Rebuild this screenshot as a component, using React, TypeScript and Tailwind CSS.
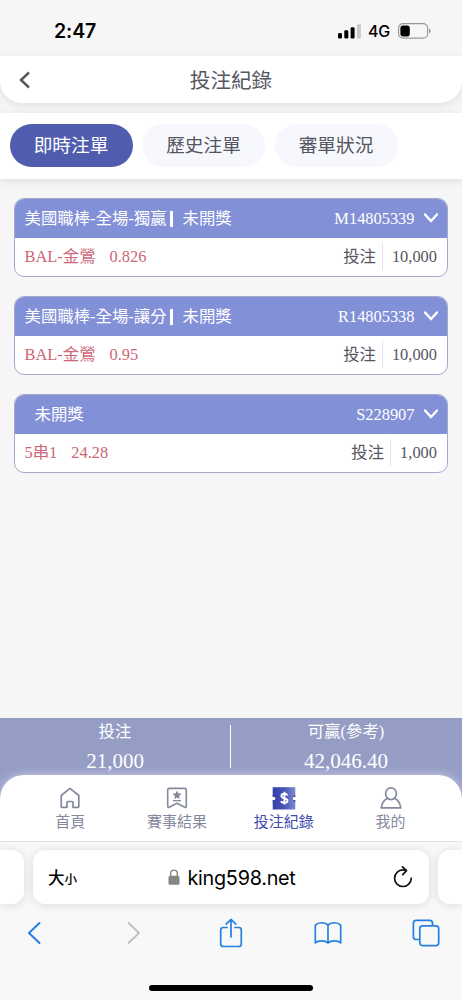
import React from 'react';

// 注單資料
const bets = [
  { title: '美國職棒-全場-獨贏', status: '未開獎', id: 'M14805339', pick: 'BAL-金鶯', odds: '0.826', amount: '10,000' },
  { title: '美國職棒-全場-讓分', status: '未開獎', id: 'R14805338', pick: 'BAL-金鶯', odds: '0.95', amount: '10,000' },
  { title: '', status: '未開獎', id: 'S228907', pick: '5串1', odds: '24.28', amount: '1,000' }
];

const tabs = ['即時注單', '歷史注單', '審單狀況'];

const StatusBar: React.FC = () => (
  <div className="h-14 shrink-0 flex items-center justify-between pl-[54px] pr-[31px] pt-1.5 font-['Inter',sans-serif] text-black">
    <span className="text-[19.5px] leading-6 font-semibold tracking-[-0.1px]">2:47</span>
    <div className="flex items-center">
      <svg className="w-[23px] h-[15px]" viewBox="0 0 23 15">
        <rect x="0" y="9" width="4" height="5.5" rx="1.2" />
        <rect x="6.3" y="6.3" width="4" height="8.2" rx="1.2" />
        <rect x="12.6" y="3.2" width="4" height="11.3" rx="1.2" />
        <rect x="18.9" y="0.3" width="4" height="14.2" rx="1.2" fill="#c9c9c9" />
      </svg>
      <span className="ml-[7px] w-[23px] text-[16px] leading-5 font-medium tracking-[-0.2px]">4G</span>
      <svg className="ml-[7px] w-[33px] h-4" viewBox="0 0 33 16">
        <rect x="0.6" y="0.6" width="29" height="14.6" rx="4.4" fill="none" stroke="#9a9a9a" strokeWidth="1.2" />
        <rect x="2.4" y="2.4" width="9.4" height="11" rx="2.6" />
        <path d="M31 5.5v5c1-.4 1.7-1.3 1.7-2.5S32 5.9 31 5.5z" fill="#9a9a9a" />
      </svg>
    </div>
  </div>
);

const BetCard: React.FC<{ bet: (typeof bets)[number] }> = ({ bet }) => (
  <div className="h-[79px] rounded-[10px] border-[1.5px] border-[#a5a8cb] bg-white overflow-hidden text-[16.4px] leading-6">
    <div className="h-[39px] flex items-center justify-between bg-[#8290d7] pl-[9.5px] pr-[9.5px] text-white">
      <div className="flex items-center">
        <span>{bet.title}</span>
        {bet.title && <span className="ml-[3px] w-[3px] h-4 bg-white"></span>}
        <span className={bet.title ? 'ml-[10px]' : 'ml-[10px]'}>{bet.status}</span>
      </div>
      <div className="flex items-center">
        <span>{bet.id}</span>
        <svg className="ml-[9px] w-3.5 h-2.5 mb-0.5" viewBox="0 0 14 10" fill="none" stroke="currentColor" strokeWidth="2.4">
          <path d="M1 1.5l6 6.500 6-6.500" strokeLinecap="round" />
        </svg>
      </div>
    </div>
    <div className="h-[38px] flex items-center justify-between pl-[9.5px] pr-[10px] pb-px">
      <div className="flex items-center text-[#cd6676]">
        <span>{bet.pick}</span>
        <span className="ml-3.5">{bet.odds}</span>
      </div>
      <div className="flex items-center text-[#56565f]">
        <span>投注</span>
        <span className="ml-[6px] w-px h-[27px] bg-[#e2e2ee]"></span>
        <span className="ml-[9px]">{bet.amount}</span>
      </div>
    </div>
  </div>
);

// 底部導覽圖示
const HomeIcon = () => (
  <svg className="w-6 h-6" viewBox="0 0 24 24" fill="none" stroke="currentColor" strokeWidth="1.7" strokeLinejoin="round">
    <path d="M3.2 9.5L12 2.300l8.800 7.200V20.500a.8.8 0 0 1-.8.8H15v-4.800a1 1 0 0 0-1-1h-4a1 1 0 0 0-1 1v4.800H4a.8.8 0 0 1-.8-.8z" />
  </svg>
);

const ResultIcon = () => (
  <svg className="w-6 h-6" viewBox="0 0 24 24" fill="none" stroke="currentColor" strokeWidth="1.6" strokeLinejoin="round">
    <path d="M4.2 2.4h15.600a1.500 1.500 0 0 1 1.500 1.500v16.500c0 .8-.8 1.200-1.500.8L12 17.300l-7.800 3.900c-.7.4-1.500 0-1.500-.8V3.900a1.500 1.500 0 0 1 1.500-1.500z" />
    <path d="M12 4.500l1.350 2.850 3.100.4-2.300 2.150.6 3.100L12 11.500l-2.750 1.500.6-3.100-2.300-2.150 3.100-.4z" fill="currentColor" stroke="none" />
    <path d="M8 14.700h8" strokeWidth="1.3" />
  </svg>
);

const RecordIcon = () => (
  <svg className="w-6 h-6" viewBox="0 0 24 24">
    <defs>
      <linearGradient id="ticket" x1="0" y1="0" x2="1" y2="0">
        <stop offset="0" stopColor="#3441ad" />
        <stop offset="0.5" stopColor="#4753b4" />
        <stop offset="1" stopColor="#7d8bd3" />
      </linearGradient>
    </defs>
    <path d="M.7 1.200h22.600v22.300H.7z" fill="url(#ticket)" />
    <path d="M.7 9.300v6.400l1.800-.7 1.500-2.500L2.500 10zM23.300 9.300v6.400l-1.800-.7-1.500-2.500 1.500-2.500z" fill="#202873" />
    <path d="M0 10.700h1.700c1 0 1.700.8 1.700 1.800s-.7 1.800-1.700 1.800H0zM24 10.700h-1.700c-1 0-1.700.8-1.700 1.800s.7 1.800 1.700 1.800H24z" fill="#fff" />
    <path d="M15.400 9.500c-.5-1.200-1.700-1.700-3-1.700-1.700 0-3 .7-3 2.100 0 3.100 6.100 1.700 6.100 4.700 0 1.500-1.400 2.300-3.100 2.300-1.500 0-2.800-.6-3.200-2M12.400 5.800v12.800" fill="none" stroke="#fff" strokeWidth="1.9" />
  </svg>
);

const MeIcon = () => (
  <svg className="w-6 h-6" viewBox="0 0 24 24" fill="none" stroke="currentColor" strokeWidth="1.7" strokeLinejoin="round">
    <ellipse cx="12" cy="7.7" rx="5.4" ry="5.9" />
    <path d="M8.500 12.200C5 14 2.800 17.300 2.200 21.900h19.600c-.6-4.600-2.800-7.900-6.300-9.700" />
  </svg>
);

const navItems = [
  { label: '首頁', icon: <HomeIcon /> },
  { label: '賽事結果', icon: <ResultIcon /> },
  { label: '投注紀錄', icon: <RecordIcon />, active: true },
  { label: '我的', icon: <MeIcon /> }
];

const BrowserBar: React.FC = () => (
  <div className="h-[159px] shrink-0 flex flex-col border-t border-[#e2e2e2] bg-[#f8f8f8] overflow-hidden">
    <div className="mt-2 h-[54px] shrink-0 flex justify-between">
      <div className="w-6 rounded-r-[12px] bg-white shadow-[0_1px_10px_rgba(0,0,0,0.12)]"></div>
      <div className="w-[396px] flex items-center justify-between rounded-[12px] bg-white pl-[15px] pr-4 text-black shadow-[0_1px_10px_rgba(0,0,0,0.12)]">
        <div className="w-[60px] pt-0.5 flex items-baseline font-['Noto_Sans_CJK_TC',sans-serif] font-medium leading-6">
          <span className="text-[16.5px]">大</span>
          <span className="text-[12.5px]">小</span>
        </div>
        <div className="flex items-center pl-[3px]">
          <svg className="w-3 h-4" viewBox="0 0 12 16">
            <rect x="0.5" y="6.8" width="11" height="9" rx="1.6" fill="#858585" />
            <path d="M2.700 7.500V4.400a3.300 3.300 0 0 1 6.600 0v3.100" fill="none" stroke="#858585" strokeWidth="1.4" />
          </svg>
          <span className="ml-[7px] pt-0.5 font-['Inter',sans-serif] text-[19.8px] leading-6 tracking-[-0.25px]">king598.net</span>
        </div>
        <div className="w-[60px] flex justify-end">
          <svg className="w-5 h-[22px]" viewBox="0 0 20 22" fill="none" stroke="#111" strokeWidth="1.7" strokeLinecap="round" strokeLinejoin="round">
            <path d="M18.200 12.200a8.300 8.300 0 1 1-8.300-8.300c1.200 0 2.200.1 3.200.4" />
            <path d="M9.500.9l4 3.700-3.800 4" />
          </svg>
        </div>
      </div>
      <div className="w-6 rounded-l-[12px] bg-white shadow-[0_1px_10px_rgba(0,0,0,0.12)]"></div>
    </div>
    <div className="mt-[13px] h-8 shrink-0 flex items-center justify-between pl-5 pr-[22px] text-[#2481e0]">
      <svg className="w-7 h-6" viewBox="0 0 14 24" fill="none" stroke="currentColor" strokeWidth="2" strokeLinecap="round" strokeLinejoin="round">
        <path d="M12.500 2L2 12l10.500 10" />
      </svg>
      <svg className="w-7 h-6 text-[#c0c0c2]" viewBox="-2 0 14 24" fill="none" stroke="currentColor" strokeWidth="1.8" strokeLinecap="round" strokeLinejoin="round">
        <path d="M1.500 2L12 12 1.500 22" />
      </svg>
      <svg className="w-7 h-[30px]" viewBox="-1 0 26 30" fill="none" stroke="currentColor" strokeWidth="1.7" strokeLinecap="round" strokeLinejoin="round">
        <path d="M9 9.500H5.300a2.600 2.600 0 0 0-2.600 2.600v13.800a2.600 2.600 0 0 0 2.600 2.600h15.400a2.600 2.600 0 0 0 2.600-2.600V12.100a2.600 2.600 0 0 0-2.600-2.600H17" />
        <path d="M13 19V1.500M8.200 6.100L13 1.300l4.800 4.800" />
      </svg>
      <svg className="w-7 h-6" viewBox="0 0 30 24" fill="none" stroke="currentColor" strokeWidth="1.8" strokeLinecap="round" strokeLinejoin="round">
        <path d="M15 3.600C13.500 1.900 11 1 8.200 1 5.500 1 3 1.900 1.400 3.600v19C3 21.200 5.400 20.400 8 20.400c2.900 0 5.500.8 7 2.200 1.500-1.400 4.100-2.200 7-2.200 2.600 0 5 .8 6.600 2.200v-19C27 1.900 24.500 1 21.800 1 19 1 16.500 1.900 15 3.600zM15 3.600v19" />
      </svg>
      <svg className="w-7 h-7" viewBox="0 0 28 28" fill="none" stroke="currentColor" strokeWidth="1.7" strokeLinejoin="round">
        <path d="M7.800 20.500H4.200A2.800 2.800 0 0 1 1.400 17.700V4.200a2.800 2.800 0 0 1 2.800-2.800h13.500a2.800 2.800 0 0 1 2.800 2.800v2.700" />
        <rect x="7.8" y="6.9" width="18.9" height="19.7" rx="2.8" />
      </svg>
    </div>
    <div className="mt-auto mb-[9px] self-center w-[164px] h-[6px] rounded-full bg-black"></div>
  </div>
);

const App: React.FC = () => {
  return (
    <div className="w-[462px] h-[1000px] flex flex-col overflow-hidden bg-[#f6f6f6] font-['Liberation_Serif','Noto_Sans_CJK_TC',serif]">
      <StatusBar />

      {/* 標題列 */}
      <div className="h-[47px] shrink-0 flex items-center justify-between rounded-b-[22px] bg-white px-[19px] text-[#56565f] shadow-[0_2px_8px_rgba(0,0,0,0.1)]">
        <svg className="w-3 h-[18px]" viewBox="0 0 12 18" fill="none" stroke="currentColor" strokeWidth="2.4">
          <path d="M10 1.500L2 9l8 7.500" />
        </svg>
        <h1 className="text-[20.6px] leading-7 pt-[3px]">投注紀錄</h1>
        <div className="w-3"></div>
      </div>

      {/* 分頁 */}
      <div className="mt-2.5 h-[66px] shrink-0 flex items-center gap-[9.5px] bg-white pl-[9.5px] pb-px shadow-[0_2px_8px_rgba(0,0,0,0.1)]">
        {tabs.map((tab, i) => (
          <button
            key={tab}
            className={`w-[123px] h-[43px] rounded-full text-[18.7px] leading-6 ${i === 0 ? 'bg-[#505dae] text-white' : 'bg-[#f7f8fe] text-[#56565f]'}`}
          >
            {tab}
          </button>
        ))}
      </div>

      {/* 注單列表 */}
      <div className="flex-1 flex flex-col gap-[19px] px-3.5 pt-[19px]">
        {bets.map((bet) => (
          <BetCard key={bet.id} bet={bet} />
        ))}
      </div>

      {/* 合計與導覽列 */}
      <div className="h-[123px] shrink-0 flex flex-col bg-[#969dc5] overflow-hidden">
        <div className="h-[57px] shrink-0 flex items-center pr-px text-white text-center">
          <div className="flex-1">
            <p className="text-[16.4px] leading-7">投注</p>
            <p className="text-[21px] leading-[30px]">21,000</p>
          </div>
          <div className="w-px h-[43px] bg-white"></div>
          <div className="flex-1">
            <p className="text-[16.4px] leading-7">可贏(參考)</p>
            <p className="text-[21px] leading-[30px]">42,046.40</p>
          </div>
        </div>
        <div className="h-[66px] shrink-0 flex rounded-t-[24px] bg-white pl-[17px] pr-[18px] pt-[11px] shadow-[0_-1px_8px_rgba(225,225,245,0.6)]">
          {navItems.map((item) => (
            <div key={item.label} className={`flex-1 flex flex-col items-center ${item.active ? 'text-[#3f4db0]' : 'text-[#85899d]'}`}>
              {item.icon}
              <span className="text-[15px] leading-6">{item.label}</span>
            </div>
          ))}
        </div>
      </div>

      <BrowserBar />
    </div>
  );
};

export default App;
